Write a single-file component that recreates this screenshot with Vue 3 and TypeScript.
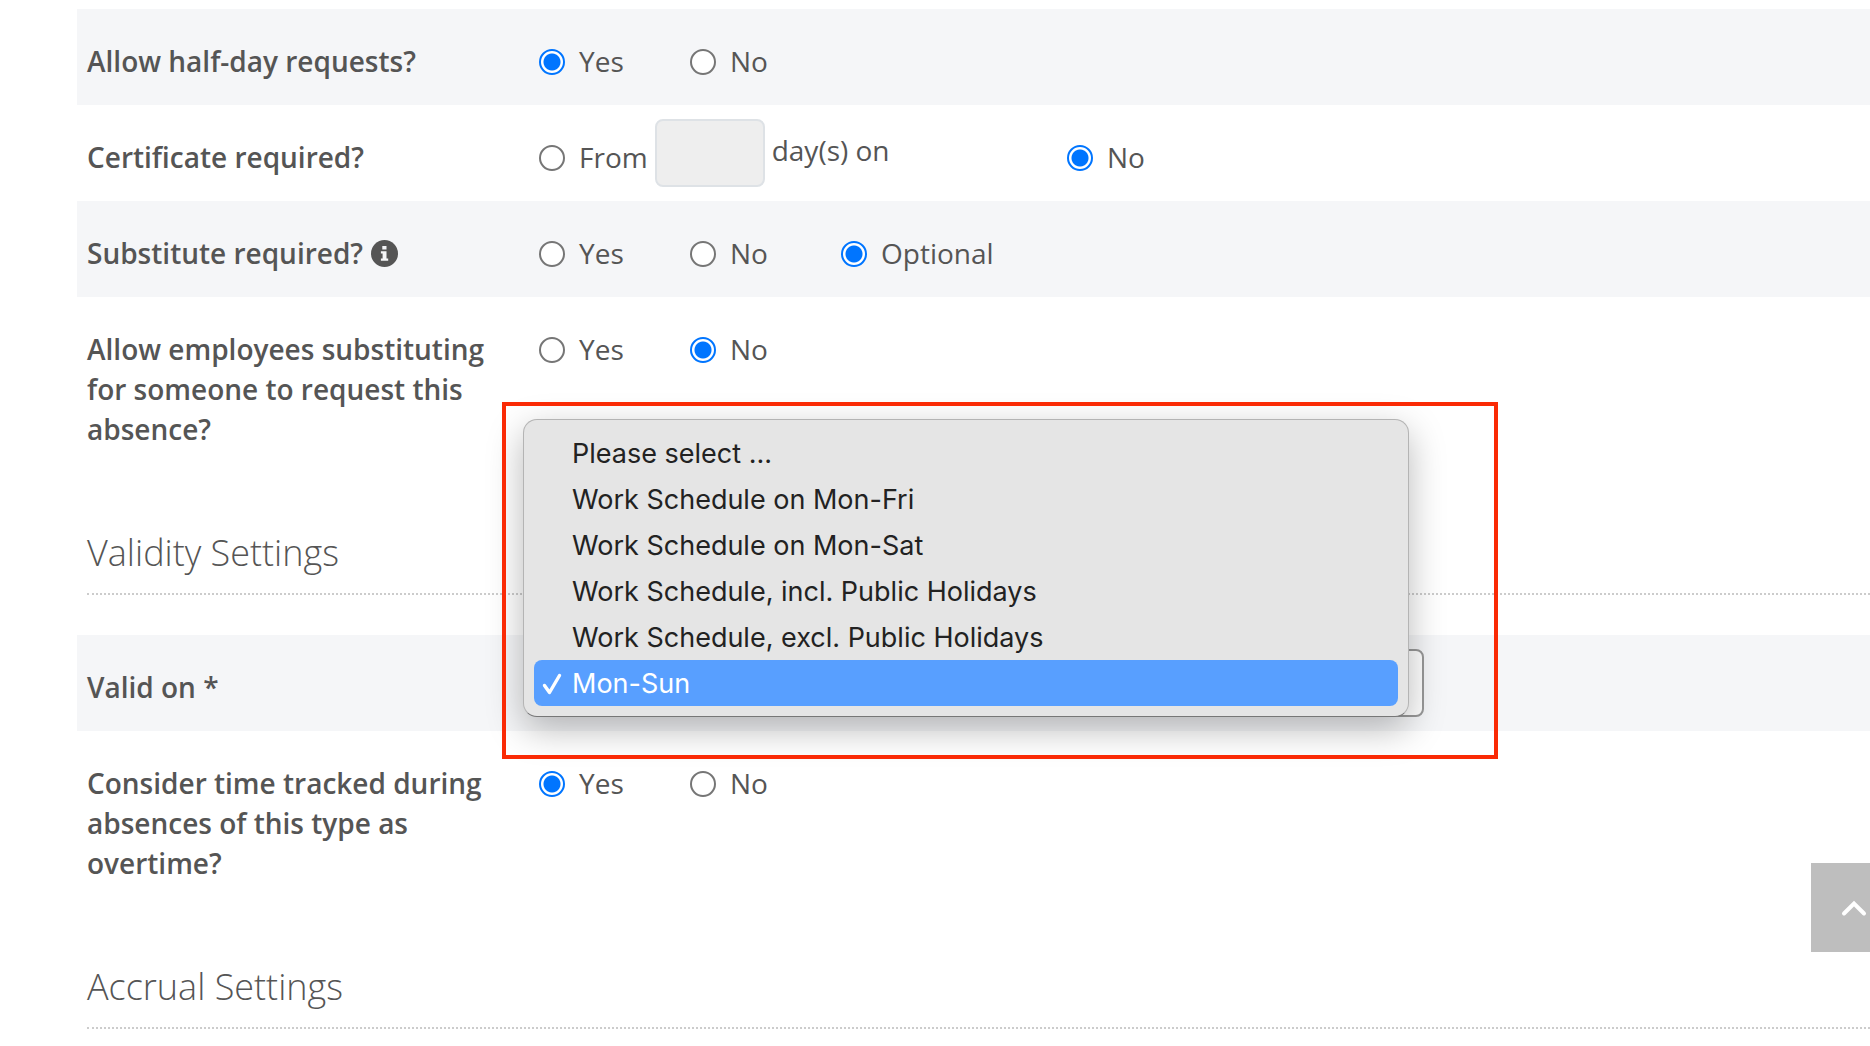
<script setup lang="ts">
import { ref } from 'vue'

const halfDay = ref('Yes')
const certificate = ref('No')
const certificateDays = ref('')
const substitute = ref('Optional')
const substituting = ref('No')
const overtime = ref('Yes')

const schedules: string[] = [
  'Please select ...',
  'Work Schedule on Mon-Fri',
  'Work Schedule on Mon-Sat',
  'Work Schedule, incl. Public Holidays',
  'Work Schedule, excl. Public Holidays',
  'Mon-Sun',
]
const validOn = ref('Mon-Sun')
</script>

<template>
  <form class="settings" @submit.prevent>
    <div class="row shaded" role="radiogroup" aria-labelledby="half-day">
      <div id="half-day" class="name">Allow half-day requests?</div>
      <div class="options">
        <label v-for="o in ['Yes', 'No']" :key="o" class="option">
          <input v-model="halfDay" type="radio" name="half-day" :value="o" />{{ o }}
        </label>
      </div>
    </div>

    <div class="row" role="radiogroup" aria-labelledby="certificate">
      <div id="certificate" class="name">Certificate required?</div>
      <div class="options">
        <div class="certificate-from">
          <label class="option inline">
            <input v-model="certificate" type="radio" name="certificate" value="From" />From
          </label>
          <input id="days" v-model="certificateDays" class="days" type="text" disabled />
          <label for="days" class="days-label">day(s) on</label>
        </div>
        <label class="option">
          <input v-model="certificate" type="radio" name="certificate" value="No" />No
        </label>
      </div>
    </div>

    <div class="row shaded" role="radiogroup" aria-labelledby="substitute">
      <div id="substitute" class="name">
        Substitute required?
        <svg class="info" viewBox="0 0 27 27" aria-hidden="true">
          <circle cx="13.5" cy="13.5" r="13.5" fill="#555" />
          <path fill="#f5f6f8" d="M11.3 6h4.2v3.6h-4.2zM9.9 11.2h5.6v7.2h1.7v2.4H9.9v-2.4h1.7v-4.8H9.9z" />
        </svg>
      </div>
      <div class="options">
        <label v-for="o in ['Yes', 'No', 'Optional']" :key="o" class="option">
          <input v-model="substitute" type="radio" name="substitute" :value="o" />{{ o }}
        </label>
      </div>
    </div>

    <div class="row" role="radiogroup" aria-labelledby="substituting">
      <div id="substituting" class="name">Allow employees substituting for someone to request this absence?</div>
      <div class="options">
        <label v-for="o in ['Yes', 'No']" :key="o" class="option">
          <input v-model="substituting" type="radio" name="substituting" :value="o" />{{ o }}
        </label>
      </div>
    </div>

    <h2 class="heading">Validity Settings</h2>

    <div class="row shaded">
      <label for="valid-on" class="name">Valid on *</label>
      <div class="field">
        <select id="valid-on" v-model="validOn" class="select">
          <option v-for="s in schedules" :key="s">{{ s }}</option>
        </select>
        <ul class="menu" role="listbox" aria-label="Valid on">
          <li
            v-for="s in schedules"
            :key="s"
            class="item"
            :class="{ selected: s === validOn }"
            role="option"
            :aria-selected="s === validOn"
            @click="validOn = s"
          >
            <span class="tick">
              <svg v-if="s === validOn" viewBox="0 0 20 22" width="20" height="22" aria-hidden="true">
                <path d="M2.5 12.5l5 7L17.5 2.5" fill="none" stroke="#fff" stroke-width="3.4" stroke-linecap="round" stroke-linejoin="round" />
              </svg>
            </span>
            {{ s }}
          </li>
        </ul>
        <div class="highlight"></div>
      </div>
    </div>

    <div class="row" role="radiogroup" aria-labelledby="overtime">
      <div id="overtime" class="name">Consider time tracked during absences of this type as overtime?</div>
      <div class="options">
        <label v-for="o in ['Yes', 'No']" :key="o" class="option">
          <input v-model="overtime" type="radio" name="overtime" :value="o" />{{ o }}
        </label>
      </div>
    </div>

    <h2 class="heading">Accrual Settings</h2>

    <button type="button" class="to-top" aria-label="Back to top">
      <svg viewBox="0 0 26 18" width="26" height="18" aria-hidden="true">
        <path d="M3 14.5L13 4.5L23 14.5" fill="none" stroke="#fff" stroke-width="4" stroke-linecap="round" />
      </svg>
    </button>
  </form>
</template>

<style>
body {
  margin: 0;
  background: #fff;
}
</style>

<style scoped>
.settings {
  padding: 9px 0 0 77px;
  font: 400 28px/40px 'Open Sans', sans-serif;
  color: #555;
}
.row {
  display: grid;
  grid-template-columns: 420px 1fr;
  column-gap: 24px;
  min-height: 96px;
  padding-left: 10px;
  box-sizing: border-box;
}
.shaded {
  background: #f5f6f8;
}
.name {
  padding: 32px 0 24px;
  font-weight: 600;
}
.info {
  width: 27px;
  height: 27px;
  margin-left: 1px;
  vertical-align: -3px;
}
.options {
  display: flex;
  align-items: flex-start;
  padding-left: 8px;
}
.option {
  display: flex;
  align-items: center;
  gap: 14px;
  min-width: 151px;
  padding-top: 32px;
}
.option.inline {
  min-width: 0;
}
.option input {
  appearance: none;
  flex: none;
  width: 26px;
  height: 26px;
  margin: 2px 0 0;
  box-sizing: border-box;
  border: 2px solid #767676;
  border-radius: 50%;
  background: #fff;
}
.option input:checked {
  border-color: #0075ff;
  background: radial-gradient(circle, #0075ff 8px, #fff 9px);
}
.certificate-from {
  display: flex;
  align-items: flex-start;
  gap: 7px;
  width: 528px;
}
.days {
  width: 110px;
  height: 68px;
  margin-top: 14px;
  padding: 0 12px;
  box-sizing: border-box;
  border: 2px solid #dee2e6;
  border-radius: 8px;
  background: #eee;
  font: inherit;
}
.days-label {
  padding-top: 25px;
}
.heading {
  margin: 56px 0 40px 10px;
  padding-bottom: 16px;
  border-bottom: 2px dotted #ccc;
  font-size: 36px;
  line-height: 48px;
  font-weight: 300;
}
.field {
  position: relative;
  padding-top: 14px;
}
.select {
  display: block;
  appearance: none;
  width: 100%;
  max-width: 893px;
  height: 68px;
  padding: 0 16px;
  border: 2px solid #999;
  border-radius: 8px;
  background: #fff;
  color: inherit;
  font: inherit;
}
.menu {
  position: absolute;
  left: -8px;
  bottom: 14px;
  width: 886px;
  margin: 0;
  padding: 10px;
  box-sizing: border-box;
  border: 1px solid #b4b4b4;
  border-bottom-color: #777;
  border-radius: 14px;
  background: #e5e5e5;
  box-shadow: 0 12px 36px rgba(0, 0, 0, 0.28);
  list-style: none;
  font: 400 27px/44px Inter, sans-serif;
  color: #222;
}
.item {
  display: flex;
  align-items: center;
  padding-top: 2px;
  border-radius: 8px;
}
.item.selected {
  background: #589fff;
  color: #fff;
}
.tick {
  display: flex;
  width: 30px;
  padding-left: 8px;
}
.highlight {
  position: absolute;
  left: -29px;
  bottom: -28px;
  width: 996px;
  height: 357px;
  box-sizing: border-box;
  border: 4px solid #fa2a05;
  pointer-events: none;
}
.to-top {
  position: fixed;
  right: 0;
  bottom: 94px;
  display: flex;
  align-items: center;
  justify-content: flex-end;
  width: 59px;
  height: 89px;
  padding: 0 3px 0 0;
  border: 0;
  background: #bebebe;
}
</style>
